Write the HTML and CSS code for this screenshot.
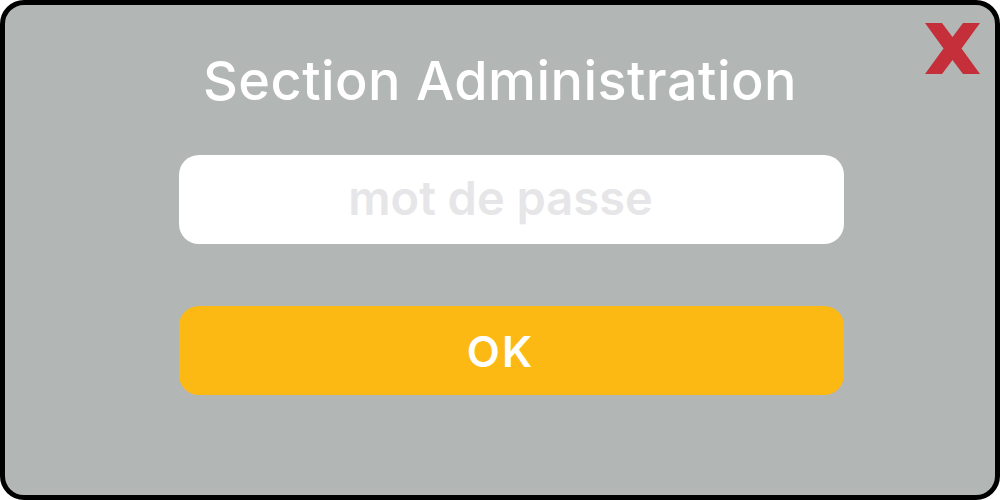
FILE: index.html
```html
<!DOCTYPE html>
<html lang="fr">
<head>
<meta charset="utf-8">
<link rel="stylesheet" href="styles.css">
</head>
<body>
<div class="dialog">
  <button class="close" aria-label="Fermer">
    <svg width="55" height="51" viewBox="0 0 55 51"><polygon fill="#c42f3a" points="0,0 17,0 27.5,14 38,0 55,0 36.5,25.5 55,51 38,51 27.5,37 17,51 0,51 18.5,25.5"/></svg>
  </button>
  <h1 class="title">Section Administration</h1>
  <div class="form">
    <input class="field" type="password" placeholder="mot de passe">
    <button class="ok">OK</button>
  </div>
</div>
</body>
</html>
```
FILE: styles.css
```css
html, body { margin: 0; padding: 0; }
body { width: 1000px; height: 500px; font-family: Inter, "Noto Sans", sans-serif; }
.dialog {
  position: relative;
  box-sizing: border-box;
  width: 1000px; height: 500px;
  background: #b2b6b4;
  border: 5px solid #000;
  border-radius: 24px;
  display: flex; flex-direction: column; align-items: center;
}
.close {
  position: absolute; top: 18px; right: 15px;
  background: none; border: 0; padding: 0; line-height: 0;
}
.title {
  margin: 44px 0 0; color: #fff; font-size: 54px; font-weight: 500; line-height: 64px;
  letter-spacing: 0.45px;
}
.form { margin-top: 42px; align-self: flex-start; margin-left: 174px; display: flex; flex-direction: column; gap: 62px; width: 665px; }
.field, .ok {
  box-sizing: border-box; width: 665px; height: 89px; border: 0; border-radius: 20px;
  font-family: inherit; text-align: center; outline: none; padding: 0 22px 0 0;
}
.field { background: #fff; font-size: 47px; font-weight: 600; color: #333; padding-bottom: 4px; }
.field::placeholder { color: #e6e6e8; }
.ok { background: #fdb913; color: #fff; font-size: 43px; font-weight: 600; letter-spacing: 2px; }
```
